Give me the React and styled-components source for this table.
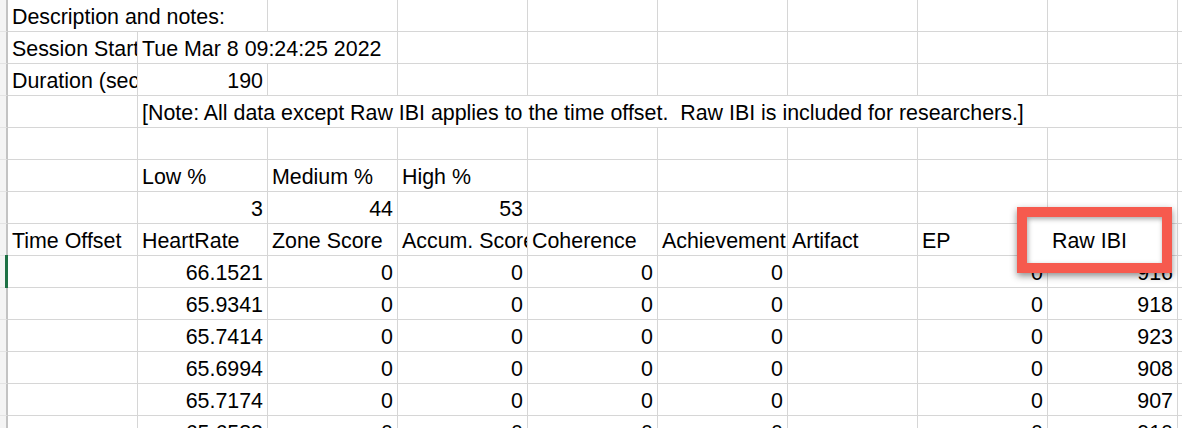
import React from "react";
import styled, { createGlobalStyle } from "styled-components";

const Global = createGlobalStyle`
  html, body { margin: 0; padding: 0; background: #fff; overflow: hidden; }
  #root { width: 1182px; height: 428px; overflow: hidden; }
`;

const Sheet = styled.div`
  width: 1182px;
  height: 428px;
  overflow: hidden;
  font-family: "Liberation Sans", Arial, sans-serif;
  font-size: 21.4px;
  color: #000;
  display: flex;
  flex-direction: column;
`;

const Row = styled.div`
  display: flex;
  flex: 0 0 auto;
  height: 31px;
  border-bottom: 1px solid #d6d6d6;
`;

const RowHead = styled.div`
  flex: 0 0 8px;
  height: 32px;
  margin-bottom: -1px;
  box-sizing: border-box;
  background: #f4f4f4;
  border-bottom: 1px solid #e4e4e4;
  border-right: 2px solid #c3c3c3;
  position: relative;
`;

const ActiveMark = styled.div`
  position: absolute;
  right: -2px;
  top: -1px;
  width: 3px;
  height: 33px;
  background: #1e7145;
`;

const Cell = styled.div`
  flex: 0 0 130px;
  width: 130px;
  height: 31px;
  box-sizing: border-box;
  border-right: 1px solid ${(p) => (p.$open ? "transparent" : "#d6d6d6")};
  overflow: ${(p) => (p.$spill ? "visible" : "hidden")};
  white-space: pre;
  display: flex;
  align-items: flex-end;
  justify-content: ${(p) => (p.$num ? "flex-end" : "flex-start")};
  padding: ${(p) => (p.$num ? "0 4px 0 0" : "0 0 0 4px")};
  line-height: 28px;
  position: relative;
`;

const CellText = styled.span`
  position: relative;
  z-index: ${(p) => (p.$raised ? 3 : "auto")};
`;

const Callout = styled.div`
  position: absolute;
  left: -31px;
  top: -17px;
  width: 155px;
  height: 66px;
  box-sizing: border-box;
  border: 10px solid #f65a4e;
  background: #fff;
  z-index: 2;
  box-shadow: 0 3px 7px rgba(0, 0, 0, 0.45), inset 1px 2px 5px rgba(0, 0, 0, 0.35);
`;

const COLS = 11;

const T = (t, extra = {}) => ({ t, ...extra });
const N = (t) => ({ t, num: true });
const OPEN = { t: "", open: true };

const note =
  "[Note: All data except Raw IBI applies to the time offset.  Raw IBI is included for researchers.]";

const dataRows = [
  ["66.1521", "916"],
  ["65.9341", "918"],
  ["65.7414", "923"],
  ["65.6994", "908"],
  ["65.7174", "907"],
  ["65.6583", "910"],
];

const rows = [
  { cells: [T("Description and notes:", { spill: true, open: true })] },
  { cells: [T("Session Start"), T("Tue Mar 8 09:24:25 2022", { spill: true, open: true })] },
  { cells: [T("Duration (seconds)"), N("190")] },
  {
    cells: [null, T(note, { spill: true, open: true }), OPEN, OPEN, OPEN, OPEN, OPEN, OPEN],
  },
  { cells: [] },
  { cells: [null, T("Low %"), T("Medium %"), T("High %")] },
  { cells: [null, N("3"), N("44"), N("53")] },
  {
    cells: [
      T("Time Offset"),
      T("HeartRate"),
      T("Zone Score"),
      T("Accum. Score"),
      T("Coherence"),
      T("Achievement"),
      T("Artifact"),
      T("EP"),
      T("Raw IBI", { callout: true }),
    ],
  },
  ...dataRows.map(([hr, ibi], i) => ({
    active: i === 0,
    cells: [null, N(hr), N("0"), N("0"), N("0"), N("0"), null, N("0"), N(ibi)],
  })),
];

export default function App() {
  return (
    <>
      <Global />
      <Sheet>
        {rows.map((row, ri) => (
          <Row key={ri}>
            <RowHead>{row.active && <ActiveMark />}</RowHead>
            {Array.from({ length: COLS }).map((_, ci) => {
              const c = row.cells[ci];
              return (
                <Cell
                  key={ci}
                  $num={c?.num}
                  $spill={c?.spill || c?.callout}
                  $open={c?.open}
                >
                  {c?.callout && <Callout />}
                  {c && <CellText $raised={c.callout}>{c.t}</CellText>}
                </Cell>
              );
            })}
          </Row>
        ))}
      </Sheet>
    </>
  );
}
